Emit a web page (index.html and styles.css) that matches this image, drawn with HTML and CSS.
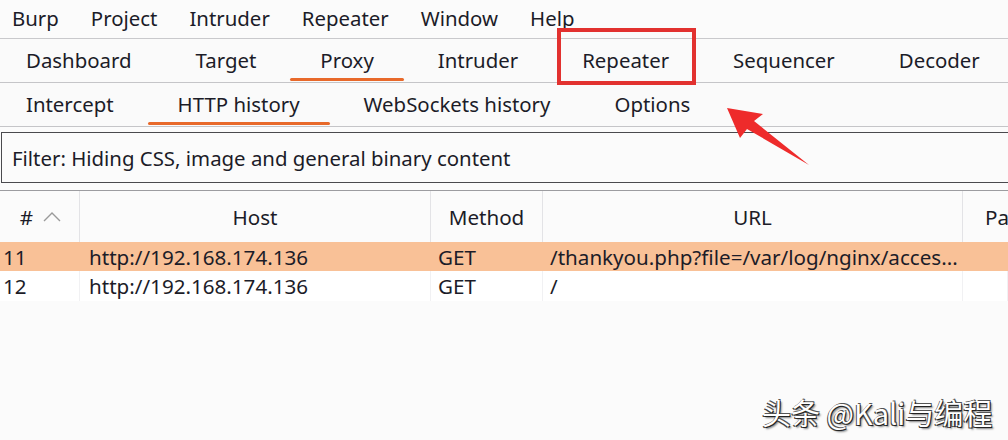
FILE: index.html
```html
<!DOCTYPE html>
<html lang="en">
<head>
<meta charset="utf-8">
<title>Burp Suite - Proxy HTTP history</title>
<link rel="stylesheet" href="styles.css">
</head>
<body>
<div class="app">
  <nav class="menubar">
    <span class="menu-item">Burp</span>
    <span class="menu-item">Project</span>
    <span class="menu-item">Intruder</span>
    <span class="menu-item">Repeater</span>
    <span class="menu-item">Window</span>
    <span class="menu-item">Help</span>
  </nav>
  <div class="tabs tabs-main">
    <span class="tab">Dashboard</span>
    <span class="tab">Target</span>
    <span class="tab active">Proxy</span>
    <span class="tab">Intruder</span>
    <span class="tab">Repeater</span>
    <span class="tab">Sequencer</span>
    <span class="tab">Decoder</span>
  </div>
  <div class="tabs tabs-sub">
    <span class="tab">Intercept</span>
    <span class="tab active">HTTP history</span>
    <span class="tab">WebSockets history</span>
    <span class="tab">Options</span>
  </div>
  <div class="filter">Filter: Hiding CSS, image and general binary content</div>
  <div class="table">
    <div class="row head">
      <div class="cell c-num"><span>#</span><svg class="sort" width="18" height="10" viewBox="0 0 18 10"><path d="M1 9 L9 1 L17 9" fill="none" stroke="#9a9a9a" stroke-width="1.4"/></svg></div>
      <div class="cell c-host">Host</div>
      <div class="cell c-method">Method</div>
      <div class="cell c-url">URL</div>
      <div class="cell c-pa">Pa</div>
    </div>
    <div class="row data selected">
      <div class="cell c-num">11</div>
      <div class="cell c-host">http://192.168.174.136</div>
      <div class="cell c-method">GET</div>
      <div class="cell c-url">/thankyou.php?file=/var/log/nginx/acces...</div>
      <div class="cell c-pa"></div>
    </div>
    <div class="row data">
      <div class="cell c-num">12</div>
      <div class="cell c-host">http://192.168.174.136</div>
      <div class="cell c-method">GET</div>
      <div class="cell c-url">/</div>
      <div class="cell c-pa"></div>
    </div>
  </div>

  <div class="highlight-box"></div>
  <svg class="arrow" width="100" height="70" viewBox="0 0 100 70">
    <polygon points="2,3 38,9 29,16 84,60 22,24 15,33" fill="#ee2b2b"/>
  </svg>
  <div class="watermark">头条 @Kali与编程</div>
</div>
</body>
</html>
```

FILE: styles.css
```css
* { box-sizing: border-box; }
html, body { margin: 0; padding: 0; }
body {
  width: 1008px;
  height: 440px;
  overflow: hidden;
  background: #fafafa;
  font-family: "Noto Sans", "Open Sans", sans-serif;
  color: #1c1c28;
}
.app {
  position: relative;
  width: 1008px;
  height: 440px;
  overflow: hidden;
  background: #fbfbfb;
}
.menubar {
  display: flex;
  gap: 32px;
  height: 39px;
  padding-left: 12px;
  padding-bottom: 2px;
  align-items: center;
  font-size: 20.4px;
  border-bottom: 1px solid #c9c9cc;
  background: #fbfbfb;
}
.tabs {
  display: flex;
  gap: 4px;
  height: 44px;
  border-bottom: 1px solid #c5c5c8;
  font-size: 20.4px;
  background: #fafafa;
}
.tab {
  position: relative;
  display: flex;
  align-items: center;
  padding: 0 30px 2px;
  height: 100%;
  white-space: nowrap;
}
.tabs-sub .tab:first-child { padding-left: 26px; }
.tabs-main .tab:first-child { padding-left: 26px; }
.tab.active::after {
  content: "";
  position: absolute;
  left: 0;
  right: 0;
  bottom: 1px;
  height: 3px;
  border-radius: 2px;
  background: #e8692a;
}
.filter {
  margin: 5px -4px 0 1px;
  height: 51px;
  border: 1.5px solid #4a4a4e;
  background: #fbfbfb;
  display: flex;
  align-items: center;
  padding-left: 10px;
  font-size: 20.4px;
}
.table {
  margin-top: 7px;
  border-top: 1px solid #9c9ca0;
  font-size: 20.6px;
}
.row { display: flex; }
.row.head { height: 51px; background: #fbfbfb; }
.row.data { height: 29px; background: #ffffff; }
.row.data + .row.data { height: 30px; }
.row.selected { background: #f9c197; }
.cell {
  display: flex;
  align-items: center;
  white-space: nowrap;
  overflow: hidden;
}
.head .cell {
  justify-content: center;
  border-right: 1px solid #e3e3e6;
}
.c-num { width: 80px; }
.c-host { width: 351px; }
.c-method { width: 112px; }
.c-url { width: 420px; }
.c-pa { flex: 1; }
.head .c-pa { justify-content: flex-start; padding-left: 22px; border-right: none; }
.head .c-num { gap: 10px; padding-left: 2px; }
.data .c-num { padding-left: 3px; }
.data .c-host { padding-left: 9px; }
.data .c-method { padding-left: 7px; }
.data .c-url { padding-left: 7px; }
.data .cell { border-right: 1px solid transparent; }
.row.data:not(.selected) .cell { border-right-color: #f1f1f3; }
.sort { display: block; }

.highlight-box {
  position: absolute;
  left: 557px;
  top: 28px;
  width: 139px;
  height: 57px;
  border: 4px solid #e2312f;
}
.arrow {
  position: absolute;
  left: 725px;
  top: 105px;
}
.watermark {
  position: absolute;
  left: 762px;
  top: 391px;
  font-family: "Noto Sans CJK SC", "Noto Sans", sans-serif;
  font-size: 29px;
  color: #ffffff;
  letter-spacing: 0;
  text-shadow: 1px 1px 0 #222, -1px 1px 0 #444, 1px -1px 0 #555, 2px 2px 2px rgba(0,0,0,0.5);
}
```
